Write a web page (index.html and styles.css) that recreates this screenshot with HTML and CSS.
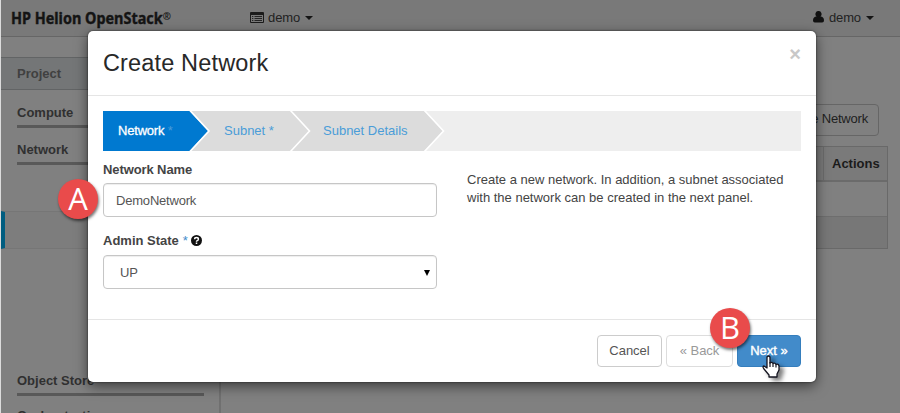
FILE: index.html
```html
<!DOCTYPE html>
<html lang="en">
<head>
<meta charset="utf-8">
<title>Create Network</title>
<link rel="stylesheet" href="styles.css">
</head>
<body>
<div class="page">
  <header class="topbar">
    <div class="brand"><span>HP Helion OpenStack<small>®</small></span></div>
    <div class="menu project-menu">
      <svg width="14" height="11" viewBox="0 0 14 11"><path d="M1 0h12q1 0 1 1v9q0 1-1 1H1q-1 0-1-1V1q0-1 1-1zM1 3v7h12V3z" fill="#1b1b1b" fill-rule="evenodd"/><path d="M2 4.5h1.3M4.5 4.5H12M2 6.5h1.3M4.5 6.5H12M2 8.5h1.3M4.5 8.5H12" stroke="#252525"/></svg>
      <span>demo</span><i class="caret"></i>
    </div>
    <div class="menu user-menu">
      <svg width="11" height="12" viewBox="0 0 11 12"><path d="M5.500 0a2.900 3.100 0 0 1 2 5.500Q11 5.800 11 9.500q0 2-1.800 2H1.800Q0 11.500 0 9.500 0 5.800 3.500 5.500A2.900 3.100 0 0 1 5.500 0z" fill="#111"/></svg>
      <span>demo</span><i class="caret"></i>
    </div>
  </header>
  <div class="columns">
    <nav class="sidebar">
      <div class="panel-head">Project</div>
      <div class="group">Compute</div>
      <div class="group">Network</div>
      <div class="active-row"></div>
      <div class="group store">Object Store</div>
      <div class="group last">Orchestration</div>
    </nav>
    <main class="content">
      <div class="create">+ Create Network</div>
      <div class="table">
        <div class="row head"><div class="cell"></div><div class="cell actions">Actions</div></div>
        <div class="row"></div>
        <div class="row foot"></div>
      </div>
    </main>
  </div>
</div>

<section class="modal">
  <div class="modal-head">
    <h1>Create Network</h1>
    <span class="close">×</span>
  </div>
  <div class="modal-body">
    <div class="steps">
      <svg class="step-shapes" width="342" height="40" viewBox="0 0 342 40">
        <path d="M0 0H321L340 20 321 40H0z" fill="#dcdcdc"/>
        <path d="M0 0H86.500L105 20 86.500 40H0z" fill="#0079d0"/>
        <path d="M87 -.5L106 20 87 40.500M187.500 -.5L206.500 20 187.500 40.500M321.500 -.5L340.500 20 321.500 40.500" fill="none" stroke="#fff" stroke-width="1.600"/>
      </svg>
      <span class="step s1">Network <em>*</em></span>
      <span class="step s2">Subnet *</span>
      <span class="step s3">Subnet Details</span>
    </div>
    <div class="form">
      <div class="fields">
        <label>Network Name</label>
        <div class="control name"><span>DemoNetwork</span></div>
        <label class="state">Admin State <b>*</b>
          <svg width="11" height="11" viewBox="0 0 11 11"><circle cx="5.500" cy="5.500" r="5.500" fill="#111"/><path d="M3.600 4.300Q3.600 2.600 5.500 2.600T7.400 4.200Q7.400 5.100 6.200 5.600 5.500 5.900 5.500 6.700M5.500 7.500v1.500" fill="none" stroke="#fff" stroke-width="1.500"/></svg>
        </label>
        <div class="control select"><span>UP</span><i></i></div>
      </div>
      <p class="help">Create a new network. In addition, a subnet associated<br>with the network can be created in the next panel.</p>
    </div>
  </div>
  <div class="modal-foot">
    <div class="btn cancel">Cancel</div>
    <div class="btn back">« Back</div>
    <div class="btn next">Next »</div>
  </div>
</section>

<div class="badge a">A</div>
<div class="badge b">B</div>
<svg class="cursor" width="20" height="25" viewBox="0 0 20 25"><path d="M5 2Q6.500 0 8 2V8Q10 6.500 11 8.500 13 7.500 14 9.500 16.500 8.500 17 11V15L15 19V22H7V20L2 14Q0 11.500 2 11L5 13z" fill="#fff" stroke="#141420" stroke-width="1.300" stroke-linejoin="round"/><path d="M8 7v5M11 8.500V12M14 9.500V12.500" stroke="#141420" stroke-width="1.200"/></svg>
</body>
</html>
```

FILE: styles.css
```css
* { box-sizing: border-box; }
body {
  margin: 0;
  width: 900px;
  height: 413px;
  overflow: hidden;
  font: 13px/18px "Liberation Sans", Arial, sans-serif;
  color: #333;
}
svg { display: block; }
.page {
  height: 413px;
  display: flex;
  flex-direction: column;
  overflow: hidden;
  border-left: 1px solid #dcdcdc;
  background: #808080;
}
.topbar {
  flex: none;
  height: 37px;
  display: flex;
  align-items: center;
  padding: 0 26px 2px 10px;
  background: #797979;
  border-bottom: 1px solid #666;
}
.brand {
  width: 239px;
  font: bold 16px/20px "Noto Sans", sans-serif;
  color: #141414;
  white-space: nowrap;
}
.brand span {
  display: inline-block;
  transform: translateY(1px) scaleX(.9);
  transform-origin: left;
  -webkit-text-stroke: .4px #141414;
}
.brand small { font-size: 11px; line-height: 1px; vertical-align: 4px; -webkit-text-stroke: 0; }
.menu { display: flex; align-items: center; color: #222; }
.menu span { margin: 1px 5px 0 4px; letter-spacing: -.1px; }
.user-menu { margin-left: auto; }
.user-menu svg { margin-right: 1px; }
.caret { border: 4px solid transparent; border-top-color: #151515; border-bottom: 0; margin-top: 2px; }
.columns { flex: 1; display: flex; min-height: 0; }
.sidebar {
  width: 220px;
  padding-top: 20px;
  border-right: 2px solid #707070;
  font-weight: bold;
  overflow: hidden;
}
.panel-head {
  height: 33px;
  padding: 7px 16px;
  margin-bottom: 14px;
  background: #747677;
  border: solid #626465;
  border-width: 1px 0;
  color: #404040;
}
.group {
  height: 24px;
  margin: 0 15px 13px 16px;
  border-bottom: 3px solid #595959;
  color: #303030;
}
.store { margin-bottom: 11px; }
.last { letter-spacing: .4px; }
.active-row {
  height: 38px;
  margin: 46px 0 123px;
  background: #7d7d7d;
  border: solid #767676;
  border-width: 1px 0;
  border-left: 4px solid #005d80;
}
.content { flex: 1; padding: 67px 12px 0 10px; display: flex; flex-direction: column; }
.create {
  align-self: flex-end;
  height: 32px;
  margin-right: 9px;
  padding: 5px 10px;
  border: 1px solid #666;
  border-radius: 4px;
  color: #202020;
  letter-spacing: -.2px;
}
.table { margin-top: 10px; border: 1px solid #696969; }
.row { height: 35px; border-bottom: 1px solid #6e6e6e; display: flex; }
.row.head { background: #7a7a7a; border-bottom: 2px solid #6b6b6b; }
.row.foot { height: 31px; background: #777; border-bottom: 0; }
.cell { flex: 1; }
.actions {
  flex: none;
  width: 64px;
  padding: 8px 0 0 8px;
  border-left: 1px solid #6b6b6b;
  font-weight: bold;
  color: #1b1b1b;
}
.modal {
  position: absolute;
  left: 88px;
  top: 31px;
  width: 728px;
  height: 351px;
  display: flex;
  flex-direction: column;
  background: #fff;
  border-radius: 5px;
  box-shadow: 0 4px 13px rgba(0,0,0,.55), 0 0 2px rgba(0,0,0,.7);
}
.modal-head {
  height: 65px;
  padding: 18px 15px 0;
  display: flex;
  justify-content: space-between;
  border-bottom: 1px solid #e5e5e5;
}
h1 { margin: 0; font-size: 23.500px; line-height: 28px; font-weight: normal; color: #282828; letter-spacing: .15px; }
.close { font-size: 20px; line-height: 11px; font-weight: bold; color: #c8c8c8; }
.modal-body { flex: 1; padding: 15px 15px 0; }
.steps {
  position: relative;
  height: 40px;
  display: flex;
  align-items: center;
  background: #eee;
}
.step-shapes { position: absolute; left: 0; top: 0; }
.step { position: relative; color: #4a9cd8; white-space: nowrap; }
.s1 { width: 121px; padding-left: 15px; color: #fff; letter-spacing: -.2px; -webkit-text-stroke: .3px #fff; }
.s1 em { font-style: normal; color: #4a9cd8; -webkit-text-stroke: 0; }
.s2 { width: 99px; }
.form { display: flex; padding-top: 10px; }
.fields { width: 334px; }
label { display: flex; height: 18px; font-weight: bold; color: #444; letter-spacing: -.1px; }
.control {
  height: 34px;
  display: flex;
  align-items: center;
  justify-content: space-between;
  padding: 1px 6px 0 12px;
  border: 1px solid #c6c6c6;
  border-radius: 4px;
  box-shadow: inset 0 1px 1px rgba(0,0,0,.07);
  color: #555;
  letter-spacing: -.2px;
}
.name { margin: 4px 0 15px; }
.state { letter-spacing: 0; }
.state b { color: #428bca; font-weight: normal; margin: 0 3px 0 4px; }
.state svg { margin-top: 3px; }
.select { margin-top: 5px; padding-left: 16px; }
.select i { border: 3px solid transparent; border-top: 6px solid #000; border-bottom: 0; }
.help { margin: 10px 0 0 30px; color: #444; white-space: nowrap; }
.modal-foot {
  height: 63px;
  padding: 15px 15px 0;
  display: flex;
  justify-content: flex-end;
  border-top: 1px solid #e5e5e5;
}
.btn {
  height: 32px;
  display: flex;
  align-items: center;
  justify-content: center;
  border: 1px solid #ccc;
  border-radius: 4px;
  color: #555;
}
.cancel { width: 65px; }
.back { width: 67px; margin: 0 4px; color: #999; border-color: #ddd; }
.next { width: 64px; color: #fff; background: #428bca; border-color: #357ebd; -webkit-text-stroke: .4px #fff; }
.badge {
  position: absolute;
  width: 40px;
  height: 40px;
  border-radius: 50%;
  background: #e94b4b;
  box-shadow: 1px 2px 3px rgba(0,0,0,.55);
  color: #fff;
  font: 31px/39px "Open Sans", sans-serif;
  text-align: center;
}
.a { left: 58px; top: 179px; }
.b { left: 710px; top: 308px; }
.cursor { position: absolute; left: 762px; top: 355px; filter: drop-shadow(4px 3px 2px rgba(0,0,0,.5)); }
```
